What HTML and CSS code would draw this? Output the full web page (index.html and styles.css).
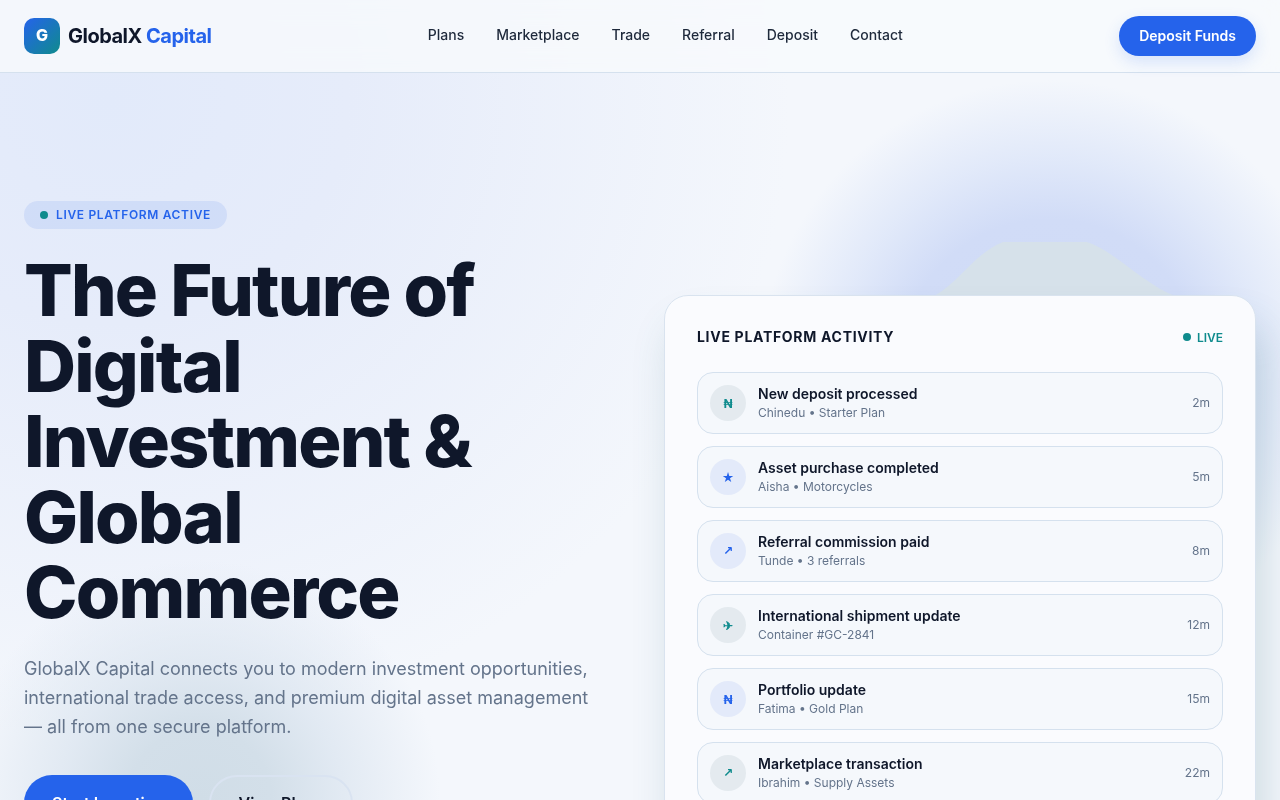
FILE: index.html
```html
<!DOCTYPE html>
<html lang="en">
<head>
    <meta charset="UTF-8">
    <meta name="viewport" content="width=device-width, initial-scale=1.0">
    <title>GlobalX Capital</title>
    <link rel="stylesheet" href="styles.css">
</head>
<body>
    <div class="glow glow-blue"></div>
    <div class="glow glow-teal"></div>
    <div class="glow glow-peak"></div>

    <header class="topbar">
        <a class="brand" href="#">
            <span class="brand-mark">G</span>
            <span class="brand-name">GlobalX <em>Capital</em></span>
        </a>
        <nav class="nav-links">
            <a href="#">Plans</a>
            <a href="#">Marketplace</a>
            <a href="#">Trade</a>
            <a href="#">Referral</a>
            <a href="#">Deposit</a>
            <a href="#">Contact</a>
        </nav>
        <a class="deposit-button" href="#">Deposit Funds</a>
    </header>

    <main class="hero">
        <section class="hero-copy">
            <div class="badge"><span class="badge-dot"></span>LIVE PLATFORM ACTIVE</div>
            <h1>The Future of Digital Investment &amp; Global Commerce</h1>
            <p>GlobalX Capital connects you to modern investment opportunities, international trade access, and premium digital asset management — all from one secure platform.</p>
            <div class="hero-actions">
                <a class="btn btn-primary" href="#">Start Investing</a>
                <a class="btn btn-outline" href="#">View Plans</a>
            </div>
        </section>

        <section class="activity-card">
            <div class="activity-head">
                <h2>LIVE PLATFORM ACTIVITY</h2>
                <span class="live-tag"><span class="live-dot"></span>LIVE</span>
            </div>
            <ul class="activity-list">
                <li class="activity-row">
                    <span class="row-icon teal">₦</span>
                    <div class="row-text"><strong>New deposit processed</strong><span>Chinedu • Starter Plan</span></div>
                    <time>2m</time>
                </li>
                <li class="activity-row">
                    <span class="row-icon blue">★</span>
                    <div class="row-text"><strong>Asset purchase completed</strong><span>Aisha • Motorcycles</span></div>
                    <time>5m</time>
                </li>
                <li class="activity-row">
                    <span class="row-icon blue arrow">↗</span>
                    <div class="row-text"><strong>Referral commission paid</strong><span>Tunde • 3 referrals</span></div>
                    <time>8m</time>
                </li>
                <li class="activity-row">
                    <span class="row-icon teal">✈</span>
                    <div class="row-text"><strong>International shipment update</strong><span>Container #GC-2841</span></div>
                    <time>12m</time>
                </li>
                <li class="activity-row">
                    <span class="row-icon blue">₦</span>
                    <div class="row-text"><strong>Portfolio update</strong><span>Fatima • Gold Plan</span></div>
                    <time>15m</time>
                </li>
                <li class="activity-row">
                    <span class="row-icon teal arrow">↗</span>
                    <div class="row-text"><strong>Marketplace transaction</strong><span>Ibrahim • Supply Assets</span></div>
                    <time>22m</time>
                </li>
            </ul>
        </section>
    </main>
</body>
</html>
```

FILE: styles.css
```css
* {
    margin: 0;
    padding: 0;
    box-sizing: border-box;
}

html, body {
    height: 800px;
    overflow: hidden;
}

body {
    position: relative;
    font-family: Inter, 'Noto Sans', sans-serif;
    color: #0f172a;
    background:
        radial-gradient(ellipse 680px 640px at 110px 100px, #e2eafa 0%, #e6ecfa 35%, rgba(240, 244, 252, 0) 100%),
        #f4f7fc;
}

a {
    color: inherit;
    text-decoration: none;
}

/* background decoration */
.glow {
    position: absolute;
    pointer-events: none;
}

.glow-blue {
    left: 760px;
    top: 80px;
    width: 580px;
    height: 580px;
    border-radius: 50%;
    background: radial-gradient(circle closest-side, #cfdaf7 0%, #d1dcf7 52%, rgba(221, 230, 249, 0.8) 74%, rgba(240, 244, 252, 0) 100%);
}

.glow-teal {
    left: -40px;
    top: 560px;
    width: 480px;
    height: 480px;
    border-radius: 50%;
    background: radial-gradient(circle closest-side, #d0dde7 0%, #d3dfe9 30%, rgba(222, 231, 241, 0.85) 58%, rgba(238, 243, 252, 0) 100%);
}

.glow-peak {
    left: 930px;
    top: 241px;
    width: 248px;
    height: 60px;
    background: #d6e1ea;
    clip-path: path("M0 60 L6 54 C30 40 45 12 73 1 L157 1 C185 10 215 45 248 56 L248 60 Z");
}

.topbar {
    position: relative;
    height: 73px;
    padding: 0 24px;
    display: flex;
    align-items: center;
    justify-content: space-between;
    background: rgba(248, 250, 252, 0.8);
    backdrop-filter: blur(12px);
    border-bottom: 1px solid #d5e1ee;
}

.brand {
    display: flex;
    align-items: center;
    gap: 8px;
}

.brand-mark {
    width: 36px;
    height: 36px;
    border-radius: 10px;
    display: flex;
    align-items: center;
    justify-content: center;
    color: #fff;
    font-size: 16px;
    font-weight: 800;
    padding-bottom: 2px;
    background: linear-gradient(135deg, #2563eb 0%, #0f8b8d 100%);
}

.brand-name {
    font-size: 20px;
    font-weight: 700;
    letter-spacing: -0.025em;
    color: #0f172a;
}

.brand-name em {
    font-style: normal;
    color: #2563eb;
}

.nav-links {
    display: flex;
    gap: 32px;
    font-size: 14px;
    font-weight: 500;
    color: #1e293b;
    padding-bottom: 3px;
}

.deposit-button {
    height: 40px;
    padding: 0 20px 2px;
    display: flex;
    align-items: center;
    border-radius: 20px;
    background: #2563eb;
    color: #fff;
    font-size: 14px;
    font-weight: 600;
    box-shadow: 0 6px 16px rgba(37, 99, 235, 0.16);
}

.hero {
    position: relative;
    padding: 128px 24px 0;
    display: grid;
    grid-template-columns: 1fr 1fr;
    gap: 48px;
    align-items: start;
}

.hero-copy,
.activity-card {
    will-change: transform;
}

.badge {
    display: inline-flex;
    align-items: center;
    gap: 8px;
    height: 28px;
    padding: 0 16px 1px;
    border-radius: 14px;
    background: rgba(37, 99, 235, 0.1);
    color: #2563eb;
    font-size: 12px;
    font-weight: 600;
    letter-spacing: 0.055em;
}

.badge-dot {
    width: 8px;
    height: 8px;
    border-radius: 50%;
    background: #0f8b8d;
}

h1 {
    margin-top: 23px;
    font-size: 72px;
    line-height: 1.05;
    font-weight: 800;
    letter-spacing: -0.025em;
    color: #0f172a;
}

.hero-copy p {
    margin-top: 25px;
    font-size: 18px;
    line-height: 1.6;
    color: #64748b;
    max-width: 580px;
}

.hero-actions {
    margin-top: 34px;
    display: flex;
    gap: 16px;
}

.btn {
    height: 56px;
    padding: 0 28px;
    display: flex;
    align-items: center;
    border-radius: 28px;
    font-size: 16px;
    font-weight: 600;
}

.btn-primary {
    background: #2563eb;
    color: #fff;
}

.btn-outline {
    border: 2px solid #d9e3f1;
    color: #0f172a;
}

.activity-card {
    margin-top: 94px;
    padding: 32px;
    border-radius: 24px;
    background: #fafbfe;
    border: 1px solid #d9e3ef;
    box-shadow: 8px 30px 40px rgba(50, 110, 120, 0.2);
}

.activity-head {
    display: flex;
    align-items: center;
    justify-content: space-between;
    margin-bottom: 27px;
}

.activity-head h2 {
    font-size: 14px;
    font-weight: 700;
    letter-spacing: 0.05em;
}

.live-tag {
    display: flex;
    align-items: center;
    gap: 6px;
    padding-top: 1px;
    font-size: 12px;
    font-weight: 600;
    color: #0f8b8d;
}

.live-dot {
    width: 8px;
    height: 8px;
    border-radius: 50%;
    background: #0f8b8d;
}

.activity-list {
    list-style: none;
    display: flex;
    flex-direction: column;
    gap: 12px;
}

.activity-row {
    height: 62px;
    padding: 0 12px;
    display: flex;
    align-items: center;
    gap: 12px;
    border: 1px solid #d5e1ee;
    border-radius: 16px;
    background: #f5f8fc;
}

.row-icon {
    width: 36px;
    height: 36px;
    border-radius: 50%;
    flex-shrink: 0;
    display: flex;
    align-items: center;
    justify-content: center;
    font-size: 12px;
    font-weight: 700;
}

.row-icon.arrow {
    font-family: 'DejaVu Sans', sans-serif;
}

.row-icon.teal {
    background: #e4eaef;
    color: #0f8b8d;
}

.row-icon.blue {
    background: #e3eafa;
    color: #2563eb;
}

.row-text {
    flex: 1;
    display: flex;
    flex-direction: column;
    gap: 3px;
    padding-bottom: 2px;
}

.row-text strong {
    font-size: 14px;
    font-weight: 600;
    color: #0f172a;
}

.row-text span {
    font-size: 12px;
    color: #64748b;
}

.activity-row time {
    font-size: 12px;
    color: #64748b;
    padding-bottom: 2px;
}
```
